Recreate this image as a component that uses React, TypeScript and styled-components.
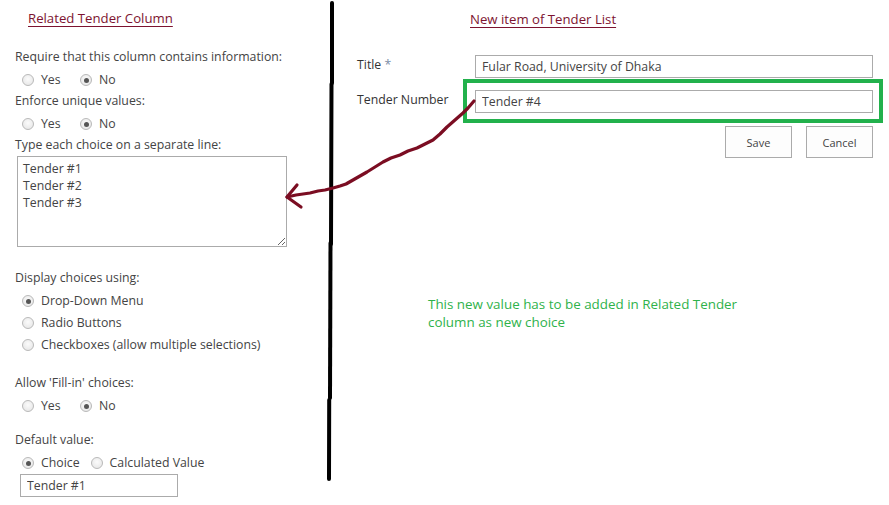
import React from "react";
import styled, { createGlobalStyle } from "styled-components";

const Global = createGlobalStyle`
  html, body { margin: 0; padding: 0; background: #fff; }
  body { font-family: "Open Sans", "Noto Sans", sans-serif; color: #444; }
`;

const FONT = `"Open Sans", "Noto Sans", sans-serif`;

const Page = styled.div`
  position: relative;
  width: 889px;
  height: 505px;
  display: flex;
  flex-direction: row;
  overflow: hidden;
  font-family: ${FONT};
  font-size: 12.3px;
  color: #444;
`;

const LeftPanel = styled.div`
  width: 312px;
  padding-left: 15px;
  display: flex;
  flex-direction: column;
`;

const RightPanel = styled.div`
  flex: 1;
  padding-left: 23px;
  display: flex;
  flex-direction: column;
`;

const Divider = styled.svg`
  width: 7px;
  height: 482px;
  flex: none;
`;

const SectionTitle = styled.div<{ $indent: number; $top: number }>`
  margin-left: ${(p) => p.$indent}px;
  margin-top: ${(p) => p.$top}px;
  line-height: 20px;
  font-size: 13.2px;
  color: #7d1330;
  text-decoration: underline;
  text-decoration-color: #7d1330;
  text-underline-offset: 3px;
`;

const Label = styled.div<{ $top?: number }>`
  margin-top: ${(p) => p.$top ?? 0}px;
  line-height: 22px;
  height: 22px;
  white-space: nowrap;
`;

const RadioRow = styled.div<{ $cell?: number; $gap?: number }>`
  display: flex;
  align-items: center;
  height: 22px;
  padding-left: 7px;
  padding-top: 1px;
  margin-bottom: -1px;
  gap: ${(p) => p.$gap ?? 0}px;
  & > * {
    min-width: ${(p) => (p.$cell ? `${p.$cell}px` : "auto")};
  }
`;

const Option = styled.label`
  display: inline-flex;
  align-items: center;
  gap: 7px;
  white-space: nowrap;
  line-height: 22px;
`;

const RadioDot = styled.span<{ $checked?: boolean }>`
  position: relative;
  width: 12px;
  height: 12px;
  box-sizing: border-box;
  border-radius: 50%;
  border: 1px solid #b9b9b9;
  background: radial-gradient(circle at 50% 40%, #fbfbfb 0%, #e3e3e3 100%);
  flex: none;
  &::after {
    content: "";
    display: ${(p) => (p.$checked ? "block" : "none")};
    position: absolute;
    left: 2.5px;
    top: 2.5px;
    width: 5px;
    height: 5px;
    border-radius: 50%;
    background: #555;
  }
`;

const ChoicesBox = styled.textarea`
  margin: 0 0 0 2px;
  width: 270px;
  height: 91px;
  box-sizing: border-box;
  border: 1px solid #ababab;
  padding: 3px 5px;
  font-family: ${FONT};
  font-size: 12.3px;
  line-height: 17px;
  color: #444;
  resize: both;
  outline: none;
`;

const SmallInput = styled.input`
  margin: 1px 0 0 5px;
  width: 158px;
  height: 23px;
  box-sizing: border-box;
  border: 1px solid #ababab;
  padding: 0 6px;
  font-family: ${FONT};
  font-size: 12.3px;
  color: #444;
  outline: none;
`;

const FormRow = styled.div<{ $top: number }>`
  display: flex;
  align-items: flex-start;
  margin-top: ${(p) => p.$top}px;
`;

const FieldLabel = styled.div`
  width: 118px;
  flex: none;
  line-height: 18px;
  padding-top: 1px;
  white-space: nowrap;
  color: #333;
`;

const Req = styled.span`
  color: #7a8ba6;
`;

const FieldWrap = styled.div<{ $highlight?: boolean }>`
  position: relative;
  width: 398px;
  &::after {
    content: "";
    display: ${(p) => (p.$highlight ? "block" : "none")};
    position: absolute;
    left: -12px;
    top: -11px;
    right: -10px;
    bottom: -10px;
    border: 4px solid #22b14c;
    pointer-events: none;
  }
`;

const TextField = styled.input`
  display: block;
  width: 100%;
  height: 23px;
  box-sizing: border-box;
  border: 1px solid #ababab;
  padding: 0 6px;
  font-family: ${FONT};
  font-size: 12.3px;
  color: #444;
  outline: none;
`;

const ButtonBar = styled.div`
  display: flex;
  justify-content: flex-end;
  gap: 14px;
  width: 516px;
  margin-top: 13px;
`;

const Button = styled.button`
  width: 67px;
  height: 32px;
  box-sizing: border-box;
  border: 1px solid #ababab;
  background: #fdfdfd;
  font-family: ${FONT};
  font-size: 11px;
  color: #444;
  padding: 0;
`;

const Note = styled.div`
  margin-top: 137px;
  margin-left: 71px;
  width: 360px;
  line-height: 18px;
  font-size: 13.4px;
  color: #2fb24b;
`;

const Overlay = styled.svg`
  position: absolute;
  left: 0;
  top: 0;
  width: 889px;
  height: 505px;
  pointer-events: none;
`;

type Opt = { label: string; checked?: boolean };

const Radios: React.FC<{ options: Opt[]; cell?: number; gap?: number }> = ({ options, cell, gap }) => (
  <RadioRow $cell={cell} $gap={gap}>
    {options.map((o) => (
      <Option key={o.label}>
        <RadioDot $checked={o.checked} />
        {o.label}
      </Option>
    ))}
  </RadioRow>
);

const StackRadio: React.FC<Opt> = ({ label, checked }) => (
  <RadioRow>
    <Option>
      <RadioDot $checked={checked} />
      {label}
    </Option>
  </RadioRow>
);

export default function App() {
  return (
    <Page>
      <Global />
      <LeftPanel>
        <SectionTitle $indent={13} $top={8}>Related Tender Column</SectionTitle>
        <Label $top={18}>Require that this column contains information:</Label>
        <Radios cell={58} options={[{ label: "Yes" }, { label: "No", checked: true }]} />
        <Label>Enforce unique values:</Label>
        <Radios cell={58} options={[{ label: "Yes" }, { label: "No", checked: true }]} />
        <Label>Type each choice on a separate line:</Label>
        <ChoicesBox defaultValue={"Tender #1\nTender #2\nTender #3"} />
        <Label $top={20}>Display choices using:</Label>
        <StackRadio label="Drop-Down Menu" checked />
        <StackRadio label="Radio Buttons" />
        <StackRadio label="Checkboxes (allow multiple selections)" />
        <Label $top={17}>Allow 'Fill-in' choices:</Label>
        <Radios cell={58} options={[{ label: "Yes" }, { label: "No", checked: true }]} />
        <Label $top={13}>Default value:</Label>
        <Radios gap={11} options={[{ label: "Choice", checked: true }, { label: "Calculated Value" }]} />
        <SmallInput defaultValue="Tender #1" />
      </LeftPanel>

      <Divider viewBox="0 0 7 482">
        <g stroke="#000" strokeLinecap="round" fill="none">
          <line x1="5" y1="3" x2="5" y2="83" strokeWidth="4" />
          <line x1="4.5" y1="84" x2="4" y2="244" strokeWidth="4" />
          <line x1="3.5" y1="243" x2="3" y2="398" strokeWidth="4" />
          <line x1="2.2" y1="400" x2="2" y2="479" strokeWidth="4" />
        </g>
      </Divider>

      <RightPanel>
        <SectionTitle $indent={113} $top={9}>New item of Tender List</SectionTitle>
        <FormRow $top={26}>
          <FieldLabel>
            Title <Req>*</Req>
          </FieldLabel>
          <FieldWrap>
            <TextField defaultValue="Fular Road, University of Dhaka" />
          </FieldWrap>
        </FormRow>
        <FormRow $top={12}>
          <FieldLabel>Tender Number</FieldLabel>
          <FieldWrap $highlight>
            <TextField defaultValue="Tender #4" />
          </FieldWrap>
        </FormRow>
        <ButtonBar>
          <Button>Save</Button>
          <Button>Cancel</Button>
        </ButtonBar>
        <Note>
          This new value has to be added in Related Tender
          <br />
          column as new choice
        </Note>
      </RightPanel>

      <Overlay viewBox="0 0 889 505">
        <g stroke="#7b0d22" strokeWidth="3.2" fill="none" strokeLinecap="round" strokeLinejoin="round">
          <path d="M474 101 L468 108 L463 113 L455 120 L447 127 L440 134 L433 140 L425 144 L417 148 L408 151 L400 155 L391 158 L383 162 L375 167 L367 172 L360 176 L353 180 L346 184 L340 186 L333 188 L325 190 L318 191 L310 193 L303 194 L296 195 L287 197" />
          <path d="M297 185 L287 197 L301 207" />
        </g>
      </Overlay>
    </Page>
  );
}
